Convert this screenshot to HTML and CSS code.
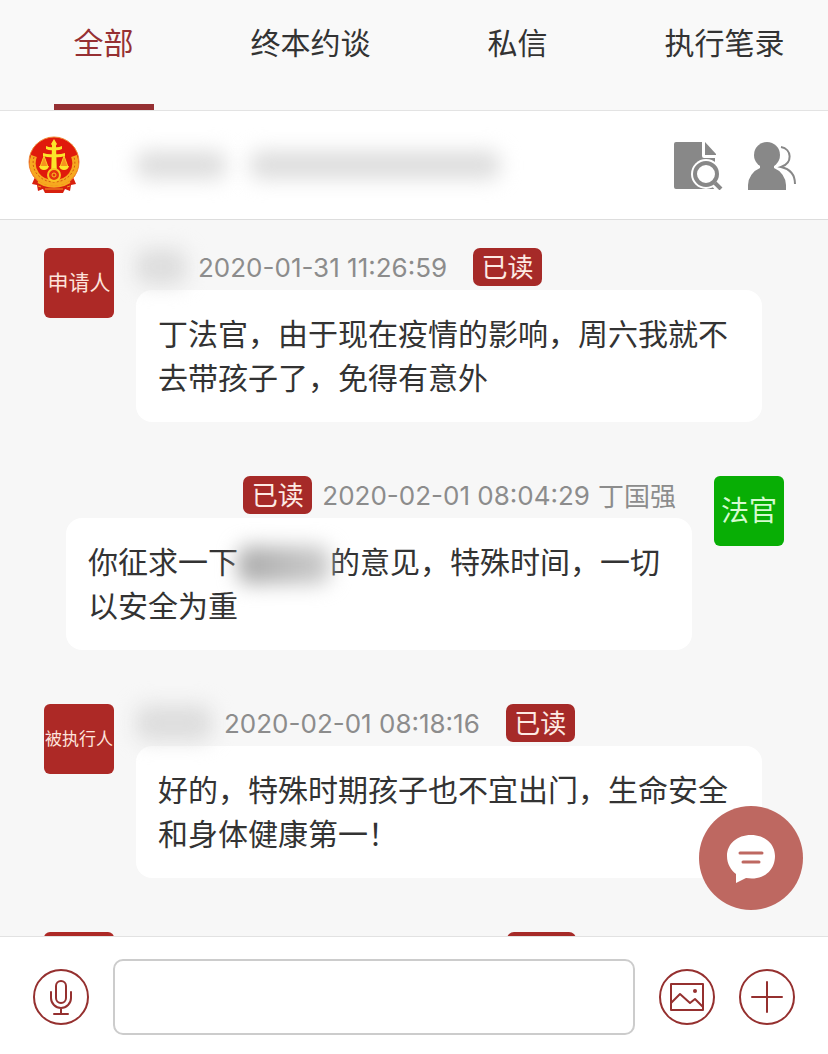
FILE: index.html
```html
<!DOCTYPE html>
<html lang="zh-CN">
<head>
<meta charset="utf-8">
<meta name="viewport" content="width=device-width, initial-scale=1">
<title>全部</title>
<link rel="stylesheet" href="styles.css">
</head>
<body>
<nav class="tabs">
  <a class="tab tab-active" href="#all">全部</a>
  <a class="tab" href="#talk">终本约谈</a>
  <a class="tab" href="#private">私信</a>
  <a class="tab" href="#record">执行笔录</a>
</nav>

<header class="case">
  <svg class="emblem" viewBox="0 0 52 58" aria-hidden="true">
    <path d="M7 41L4 48l5 1 1 6 5-2 2 4h18l2-4 5 2 1-6 5-1-3-7z" fill="#d8200e"/>
    <circle cx="26" cy="26" r="25" fill="#e01a0c" stroke="#f08a35" stroke-width="1"/>
    <path d="M6 20C1 34 11 47 26 47s25-13 20-27" fill="none" stroke="#f6a91f" stroke-width="6"/>
    <path d="M6 21C2 34 12 46 26 46s24-12 20-25" fill="none" stroke="#d6590f" stroke-width="1" stroke-dasharray="2 2"/>
    <path d="M24 40l1-30h2l1 30z" fill="#fbe62a" stroke="#fbe62a" stroke-width="2"/>
    <path d="M26 3l3 5-3 4-3-4zM18 10q4 2 8 1 4 1 8-1v3q-4 2-8 1-4 1-8-1zM15 17q6 2 11 1 5 1 11-1v3q-6 2-11 1-5 1-11-1z" fill="#fbe62a"/>
    <path d="M16 20l-4 11h8zM36 20l-4 11h8z" fill="#f7941d" stroke="#fbd127" stroke-width="1"/>
    <path d="M11 30h10q-1 4-5 4t-5-4zM31 30h10q-1 4-5 4t-5-4z" fill="#fbe62a"/>
    <circle cx="26" cy="39" r="6" fill="#e5330f" stroke="#f9c623" stroke-width="2"/>
    <circle cx="26" cy="39" r="2" fill="#e5330f" stroke="#f9c623" stroke-width="1"/>
    <path d="M10 46l6 3q10 3 20 0l6-3" fill="none" stroke="#f6a91f" stroke-width="2"/>
    <path d="M17 53h18M10 50l3 1M42 50l-3 1" stroke="#f39a20" stroke-width="1"/>
  </svg>
  <div class="case-title"><span class="mask mask-court"></span><span class="mask mask-number"></span></div>
  <button class="icon-button" type="button" aria-label="查看案件">
    <svg viewBox="0 0 50 50" aria-hidden="true">
      <path d="M2 2h26v14q0 2 2 2h11v31H2q-2 0-2-2V4q0-2 2-2z" fill="#888"/>
      <path d="M31 2l11 12v1H31z" fill="#888"/>
      <circle cx="32" cy="34" r="15" fill="#fff"/>
      <path d="M39 42l5 6" stroke="#fff" stroke-width="7"/>
      <circle cx="32" cy="34" r="11" fill="none" stroke="#888" stroke-width="4"/>
      <path d="M41 43l6 6" stroke="#888" stroke-width="4"/>
    </svg>
  </button>
  <button class="icon-button" type="button" aria-label="成员">
    <svg viewBox="0 0 50 50" aria-hidden="true">
      <circle cx="19" cy="15" r="13" fill="#888"/>
      <path d="M0 50v-5a19 19 0 0 1 12-17v-3h14v3a19 19 0 0 1 12 17v5z" fill="#888"/>
      <path d="M33 7c11 2 12 16 0 20 9 2 14 8 14 17" fill="none" stroke="#888" stroke-width="2"/>
    </svg>
  </button>
</header>

<main class="chat">
  <article class="message">
    <div class="avatar avatar-medium">申请人</div>
    <div class="content">
      <div class="meta"><span class="name"><span class="mask mask-name"></span></span><time>2020-01-31 11:26:59</time><span class="badge">已读</span></div>
      <p class="bubble">丁法官，由于现在疫情的影响，周六我就不去带孩子了，免得有意外</p>
    </div>
  </article>

  <article class="message message-own">
    <div class="avatar avatar-judge">法官</div>
    <div class="content">
      <div class="meta"><span class="badge">已读</span><time>2020-02-01 08:04:29</time><span class="sender">丁国强</span></div>
      <p class="bubble">你征求一下<span class="mask mask-inline"></span>的意见，特殊时间，一切以安全为重</p>
    </div>
  </article>

  <article class="message">
    <div class="avatar avatar-small">被执行人</div>
    <div class="content">
      <div class="meta"><span class="name name-long"><span class="mask mask-name"></span></span><time>2020-02-01 08:18:16</time><span class="badge">已读</span></div>
      <p class="bubble">好的，特殊时期孩子也不宜出门，生命安全和身体健康第一！</p>
    </div>
  </article>

  <article class="message">
    <div class="avatar"></div>
    <div class="content">
      <div class="meta"><span class="badge badge-next"></span></div>
    </div>
  </article>
</main>

<footer class="composer">
  <button class="round-button" type="button" aria-label="语音">
    <svg viewBox="0 0 56 56" aria-hidden="true">
      <circle cx="28" cy="28" r="27"/>
      <rect x="23" y="12" width="10" height="22" rx="5"/>
      <path d="M18 23v6a10 10 0 0 0 20 0v-6M28 39v5M21 45h14"/>
    </svg>
  </button>
  <input class="field" type="text" aria-label="输入消息">
  <button class="round-button" type="button" aria-label="图片">
    <svg viewBox="0 0 56 56" aria-hidden="true">
      <circle cx="28" cy="28" r="27"/>
      <path d="M12 15h32v26H12zM12 34l9-9 10 9 5-4 8 8"/>
      <circle class="dot" cx="36" cy="22" r="2"/>
    </svg>
  </button>
  <button class="round-button" type="button" aria-label="更多">
    <svg viewBox="0 0 56 56" aria-hidden="true">
      <circle cx="28" cy="28" r="27"/>
      <path d="M28 13v30M13 28h30"/>
    </svg>
  </button>
</footer>

<button class="float-button" type="button" aria-label="留言">
  <svg viewBox="0 0 50 50" aria-hidden="true">
    <path d="M25 2C11 2 1 11 1 23c0 8 4 14 9 18v9l10-5c18 3 29-8 29-22C49 11 39 2 25 2z" fill="#fff"/>
    <path d="M14 20h22M17 29h16" stroke="#be6861" stroke-width="3" stroke-linecap="round"/>
  </svg>
</button>
</body>
</html>
```
FILE: styles.css
```css
* {
  box-sizing: border-box;
}

body {
  display: flex;
  flex-direction: column;
  height: 100vh;
  margin: 0;
  background: #f7f7f7;
  color: #333;
  font-family: Inter, "Noto Sans CJK SC", sans-serif;
  font-size: 30px;
}

button {
  flex: none;
  padding: 0;
  border: 0;
  background: none;
}

svg {
  display: block;
  width: 100%;
  height: 100%;
}

.tabs {
  display: grid;
  flex: none;
  grid-template-columns: repeat(4, 1fr);
  border-bottom: 1px solid #e3e3e3;
  background: #f9f9f9;
}

.tab {
  display: flex;
  flex-direction: column;
  align-items: center;
  height: 110px;
  padding-top: 21px;
  color: #333;
  line-height: 44px;
  text-decoration: none;
}

.tab-active {
  color: #963033;
}

.tab-active::after {
  width: 100px;
  height: 6px;
  margin-top: auto;
  background: #963033;
  content: "";
}

.case {
  display: flex;
  flex: none;
  align-items: center;
  gap: 24px;
  height: 109px;
  padding: 0 30px 0 28px;
  border-bottom: 1px solid #ddd;
  background: #fff;
}

.emblem {
  flex: none;
  width: 52px;
  height: 58px;
}

.case-title {
  display: flex;
  flex: 1;
  gap: 24px;
  padding-left: 32px;
}

.icon-button {
  width: 50px;
  height: 50px;
}

.mask {
  display: inline-block;
  height: 28px;
  border-radius: 10px;
  background: #ddd;
  filter: blur(10px);
}

.mask-court {
  width: 90px;
}

.mask-number {
  width: 250px;
}

.mask-name {
  width: 100%;
  height: 36px;
  background: #ddd;
}

.mask-inline {
  width: 92px;
  height: 38px;
  background: linear-gradient(90deg, #aaa, #ccc);
  vertical-align: middle;
}

.chat {
  flex: 1;
  min-height: 0;
  padding: 28px 44px 0;
  overflow: hidden;
}

.message {
  display: flex;
  gap: 22px;
  margin-bottom: 54px;
  padding-right: 22px;
}

.message-own {
  flex-direction: row-reverse;
  padding-right: 0;
  padding-left: 22px;
}

.avatar {
  display: flex;
  flex: none;
  align-items: center;
  justify-content: center;
  width: 70px;
  height: 70px;
  padding-bottom: 4px;
  border-radius: 6px;
  background: #ad2926;
  color: #fde3dc;
  white-space: nowrap;
}

.avatar-medium {
  font-size: 21px;
}

.avatar-small {
  font-size: 17px;
}

.avatar-judge {
  background: #08ae05;
  color: #d5fbd0;
  font-size: 28px;
}

.content {
  flex: 1;
  min-width: 0;
}

.meta {
  display: flex;
  align-items: center;
  height: 38px;
  margin-bottom: 4px;
  color: #8c8c8c;
  font-size: 26px;
  white-space: nowrap;
}

.message-own .meta {
  justify-content: flex-end;
  padding-right: 16px;
}

.name {
  display: flex;
  width: 62px;
  padding-right: 12px;
}

.name-long {
  width: 88px;
}

.badge {
  display: flex;
  align-items: center;
  justify-content: center;
  width: 69px;
  height: 38px;
  margin-left: 26px;
  padding-bottom: 4px;
  border-radius: 7px;
  background: #a62a28;
  color: #fdeae4;
}

.message-own .badge {
  margin: 0 10px 0 0;
}

.badge-next {
  margin-left: 371px;
}

.sender {
  margin-left: 8px;
  padding-bottom: 2px;
}

.bubble {
  margin: 0;
  padding: 22px;
  border-radius: 16px;
  background: #fff;
  line-height: 44px;
}

.composer {
  display: flex;
  flex: none;
  align-items: center;
  gap: 24px;
  padding: 22px 33px 19px;
  border-top: 1px solid #e2e2e2;
  background: #fff;
}

.round-button {
  width: 56px;
  height: 56px;
}

.round-button svg {
  fill: none;
  stroke: #95302f;
  stroke-width: 2;
  stroke-linecap: round;
  stroke-linejoin: round;
}

.round-button .dot {
  fill: #95302f;
  stroke: none;
}

.field {
  flex: 1;
  min-width: 0;
  height: 76px;
  padding: 0 20px;
  border: 2px solid #ccc;
  border-radius: 10px;
  background: #fff;
  color: #333;
  font: inherit;
}

.float-button {
  position: fixed;
  right: 25px;
  bottom: 144px;
  display: flex;
  align-items: center;
  justify-content: center;
  width: 104px;
  height: 104px;
  border-radius: 50%;
  background: #be6861;
}

.float-button svg {
  width: 50px;
  height: 50px;
}
```
